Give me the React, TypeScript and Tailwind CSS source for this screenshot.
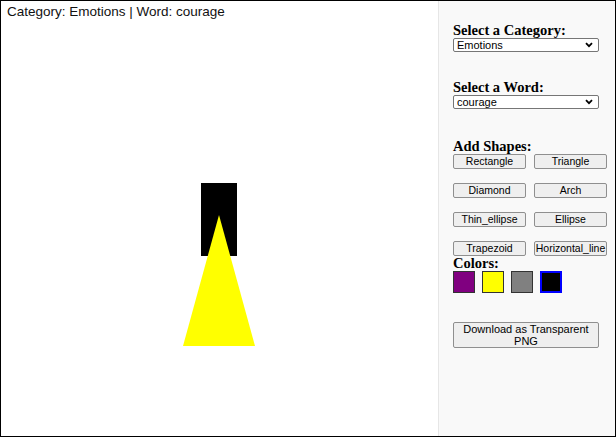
import React, { useState } from 'react';

const shapes = ['Rectangle', 'Triangle', 'Diamond', 'Arch', 'Thin_ellipse', 'Ellipse', 'Trapezoid', 'Horizontal_line'];

const colors = [
  { name: 'purple', cls: 'bg-[#800080] border border-[#333]' },
  { name: 'yellow', cls: 'bg-[#ffff00] border border-[#333]' },
  { name: 'gray', cls: 'bg-[#808080] border border-[#333]' },
  { name: 'black', cls: 'bg-black border-2 border-[#0000ff]' },
];

const heading = "font-['Liberation_Serif',serif] font-bold text-[14.5px] leading-[16px] text-black";

function Dropdown({ value, options }: { value: string; options: string[] }) {
  return (
    <div className="relative w-[146px] h-[14px]">
      <select
        defaultValue={value}
        className="block appearance-none w-full h-[14px] bg-white border border-[#767676] rounded-[2px] pl-[3px] py-0 text-[11px] leading-[12px] text-black font-['Liberation_Sans',Arial,sans-serif] outline-none"
      >
        {options.map((o) => (
          <option key={o}>{o}</option>
        ))}
      </select>
      <svg className="absolute right-[6px] top-[4px] pointer-events-none" width="8" height="6" viewBox="0 0 8 6">
        <path d="M1 1.2 L4 4.2 L7 1.2" stroke="#000" strokeWidth="1.8" fill="none" />
      </svg>
    </div>
  );
}

export default function App() {
  const [color, setColor] = useState('black');

  return (
    <div className="w-[616px] h-[437px] border border-black flex bg-white font-['Liberation_Sans',Arial,sans-serif] overflow-hidden">
      {/* Canvas */}
      <div className="relative w-[437px] h-full">
        <div className="pl-[6px] pt-[3px] text-[13.5px] leading-[16px] text-[#111]">
          Category: Emotions | Word: courage
        </div>
        <svg className="absolute left-0 top-0" width="437" height="435" viewBox="0 0 437 435">
          <rect x="200" y="182" width="36" height="73" fill="#000" />
          <polygon points="218,214 182,345 254,345" fill="#ffff00" />
        </svg>
      </div>

      {/* Sidebar */}
      <div className="flex-1 h-full bg-[#f9f9f9] border-l border-[#e6e6e6] pl-[14px] pt-[21px]">
        <div className={heading}>Select a Category:</div>
        <Dropdown value="Emotions" options={['Emotions', 'Animals', 'Nature', 'Objects']} />

        <div className={`${heading} mt-[27px]`}>Select a Word:</div>
        <Dropdown value="courage" options={['courage', 'joy', 'fear', 'anger']} />

        <div className={`${heading} mt-[29px]`}>Add Shapes:</div>
        <div className="grid grid-cols-[73px_73px] gap-x-[8px] gap-y-[14px]">
          {shapes.map((s) => (
            <button
              key={s}
              className="h-[15px] px-0 bg-[#efefef] border border-[#8f8f8f] rounded-[2px] text-[10.5px] leading-[13px] text-black text-center whitespace-nowrap overflow-hidden"
            >
              {s}
            </button>
          ))}
        </div>

        <div className={`${heading} -mt-[1px]`}>Colors:</div>
        <div className="flex gap-[7px]">
          {colors.map((c) => (
            <div
              key={c.name}
              onClick={() => setColor(c.name)}
              className={`w-[22px] h-[22px] ${c.name === color ? 'bg-black border-2 border-[#0000ff]' : c.cls}`}
            />
          ))}
        </div>

        <button className="mt-[29px] w-[146px] h-[26px] bg-[#efefef] border border-[#8f8f8f] rounded-[2px] text-[11px] leading-[12px] text-black text-center">
          Download as Transparent
          <br />
          PNG
        </button>
      </div>
    </div>
  );
}
